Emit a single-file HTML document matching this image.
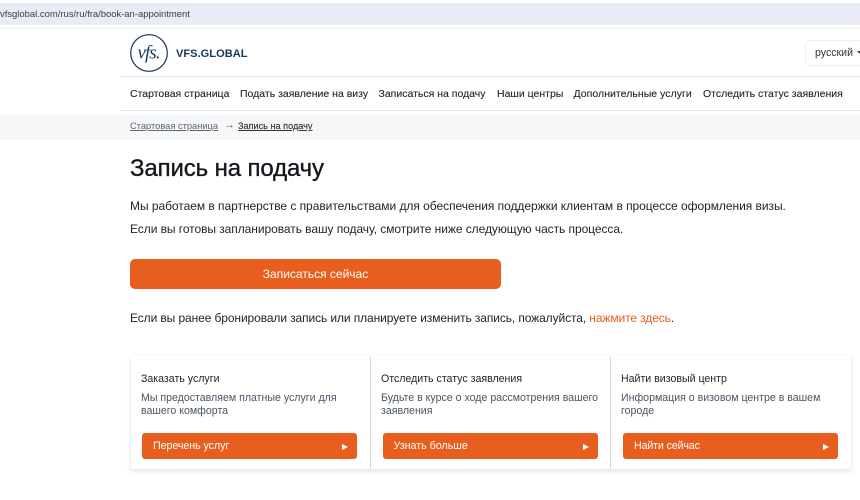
<!DOCTYPE html>
<html><head><meta charset="utf-8"><style>
html,body{margin:0;padding:0;background:#fff}
body{width:860px;height:500px;position:relative;overflow:hidden;font-family:"Liberation Sans",sans-serif;color:#212529}
.a{position:absolute;white-space:nowrap}
.t{position:absolute;white-space:nowrap;line-height:16px}
.n{top:85.5px;font-size:10.5px;-webkit-text-stroke:.1px #212529}
.btn{position:absolute;background:#e85e1e;border-radius:3px;height:26px;top:433px;width:215px}
.btn span{position:absolute;left:11px;top:5px;color:#fff;font-size:10.7px;line-height:16px;white-space:nowrap}
.btn i{position:absolute;right:9px;top:11px;width:0;height:0;border-left:6px solid #fff;border-top:3.5px solid transparent;border-bottom:3.5px solid transparent}
.h{top:371px;font-size:10.6px}
.d{top:392px;font-size:10.6px;line-height:13px!important;color:#4b5563}
</style></head><body>
<div class="a" style="left:0;top:3px;width:860px;height:22px;background:#e9ecf6"></div>
<div class="a" style="left:0;top:28px;width:860px;height:1px;background:#eceef0"></div>
<div class="t" style="left:0;top:6px;font-size:9.45px;color:#3c4043;margin-top:0.5px">vfsglobal.com/rus/ru/fra/book-an-appointment</div>
<svg class="a" style="left:130px;top:34px" width="39" height="39" viewBox="0 0 39 39"><circle cx="19" cy="19" r="18.3" fill="none" stroke="#17365d" stroke-width="1.2"/><text x="19" y="24.5" text-anchor="middle" font-family="Liberation Serif" font-style="italic" font-size="19" fill="#17365d" textLength="23">vfs.</text></svg>
<div class="t" style="left:176px;top:46px;font-size:11.1px;font-weight:700;color:#17365d">VFS.GLOBAL</div>
<div class="a" style="left:805px;top:40px;width:60px;height:26px;border:1px solid #eceef0;border-radius:5px;box-sizing:border-box"></div>
<div class="t" style="left:815px;top:45px;font-size:10.6px;color:#333">русский</div>
<div class="a" style="left:857px;top:51px;width:0;height:0;border-top:3px solid #333;border-left:3px solid transparent;border-right:3px solid transparent"></div>
<div class="a" style="left:121px;top:76px;width:739px;height:1px;background:#e4e6ea"></div>
<div class="a" style="left:121px;top:110px;width:739px;height:1px;background:#e4e6ea"></div>
<div class="t n" style="left:130px">Стартовая страница</div>
<div class="t n" style="left:240px">Подать заявление на визу</div>
<div class="t n" style="left:378.5px">Записаться на подачу</div>
<div class="t n" style="left:497px">Наши центры</div>
<div class="t n" style="left:573.5px;letter-spacing:.04px">Дополнительные услуги</div>
<div class="t n" style="left:703px">Отследить статус заявления</div>
<div class="a" style="left:0;top:114px;width:860px;height:26px;background:#f6f7f9"></div>
<div class="t" style="left:130px;top:118px;font-size:9.3px;color:#5c6670;text-decoration:underline">Стартовая страница</div>
<div class="t" style="left:224px;top:117px;font-size:11px;color:#5c6670">→</div>
<div class="t" style="left:238px;top:118px;font-size:9.15px;color:#333;text-decoration:underline;-webkit-text-stroke:.15px #333">Запись на подачу</div>
<div class="a" style="left:130px;top:154px;font-size:24px;line-height:30px;color:#14181d;letter-spacing:-.12px;-webkit-text-stroke:.35px #14181d">Запись на подачу</div>
<div class="t" style="left:130px;top:198px;font-size:12px;letter-spacing:-.04px">Мы работаем в партнерстве с правительствами для обеспечения поддержки клиентам в процессе оформления визы.</div>
<div class="t" style="left:130px;top:221px;font-size:12px;letter-spacing:-.06px">Если вы готовы запланировать вашу подачу, смотрите ниже следующую часть процесса.</div>
<div class="a" style="left:130px;top:259px;width:371px;height:30px;background:#e85e1e;border-radius:5px;color:#fff;font-size:12px;line-height:30px;text-align:center">Записаться сейчас</div>
<div class="t" style="left:130px;top:310px;font-size:12px;letter-spacing:-.1px">Если вы ранее бронировали запись или планируете изменить запись, пожалуйста, <span style="color:#e85e1e">нажмите здесь</span>.</div>
<div class="a" style="left:131px;top:356px;width:720px;height:113px;background:#fff;box-shadow:0 2px 5px rgba(60,70,90,.16)"></div>
<div class="a" style="left:370px;top:356px;width:1px;height:113px;background:#d5dbe5"></div>
<div class="a" style="left:610px;top:356px;width:1px;height:113px;background:#d5dbe5"></div>
<div class="t h" style="left:141px">Заказать услуги</div>
<div class="t d" style="left:141px">Мы предоставляем платные услуги для<br>вашего комфорта</div>
<div class="t h" style="left:381px">Отследить статус заявления</div>
<div class="t d" style="left:381px">Будьте в курсе о ходе рассмотрения вашего<br>заявления</div>
<div class="t h" style="left:621px">Найти визовый центр</div>
<div class="t d" style="left:621px">Информация о визовом центре в вашем<br>городе</div>
<div class="btn" style="left:142px"><span style="letter-spacing:-.07px">Перечень услуг</span><i></i></div>
<div class="btn" style="left:382.5px"><span>Узнать больше</span><i></i></div>
<div class="btn" style="left:623px"><span style="letter-spacing:-.15px">Найти сейчас</span><i></i></div>
</body></html>
